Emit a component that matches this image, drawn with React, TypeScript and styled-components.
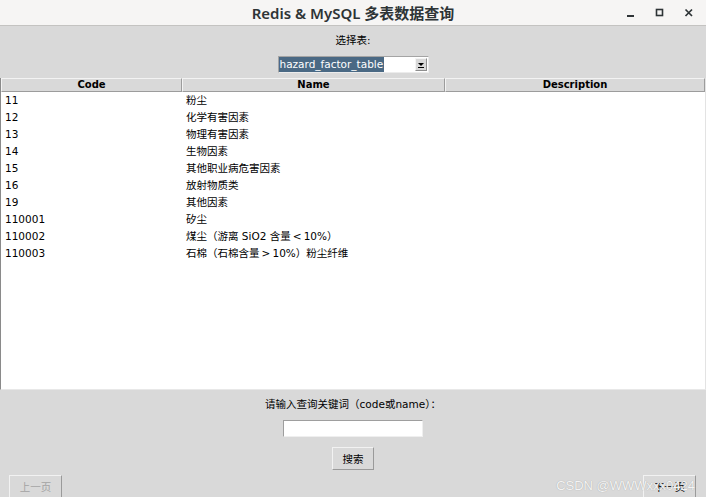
import React from 'react';
import styled, { createGlobalStyle } from 'styled-components';

const GlobalStyle = createGlobalStyle`
    html, body {
        margin: 0;
        padding: 0;
        background: #d9d9d9;
    }
    * {
        box-sizing: border-box;
    }
`;

const FONT = `"DejaVu Sans", "Noto Sans CJK SC", sans-serif`;

// 窗口
const Window = styled.div`
    position: relative;
    width: 706px;
    height: 497px;
    display: flex;
    flex-direction: column;
    overflow: hidden;
    background: #d9d9d9;
    font-family: ${FONT};
    color: #000;
`;

const TitleBar = styled.div`
    height: 26px;
    flex: none;
    display: grid;
    grid-template-columns: 1fr auto 1fr;
    align-items: center;
    background: #f6f5f4;
    border-bottom: 1px solid #c4c3c1;
`;

const Title = styled.div`
    grid-column: 2;
    font-family: "Noto Sans", "Noto Sans CJK SC", sans-serif;
    font-weight: 600;
    font-size: 15px;
    color: #2e3436;
    line-height: 25px;
    padding-top: 1px;
`;

const Controls = styled.div`
    grid-column: 3;
    justify-self: end;
    display: flex;
    align-items: center;
    gap: 15px;
    padding-right: 10px;
`;

const ControlBtn = styled.div`
    width: 14px;
    height: 14px;
    display: flex;
    align-items: center;
    justify-content: center;
`;

// 顶部：选择表
const TopPanel = styled.div`
    flex: none;
    display: flex;
    flex-direction: column;
    align-items: center;
    padding-top: 7px;
`;

const Label = styled.div`
    font-size: 10.5px;
    line-height: 14px;
    height: 14px;
`;

const Combo = styled.div`
    margin-top: 9px;
    width: 151px;
    height: 17px;
    display: flex;
    align-items: center;
    background: #fff;
    border: 1px solid #a4a4a4;
    border-right-color: #ececec;
    border-bottom-color: #ececec;
`;

const ComboText = styled.div`
    flex: 1;
    height: 15px;
    display: flex;
    align-items: center;
    font-size: 10.5px;
`;

const Selected = styled.span`
    background: #4a6984;
    color: #fff;
    line-height: 15px;
    padding: 0 1px;
`;

const ComboArrow = styled.div`
    width: 12px;
    height: 13px;
    margin-right: 1px;
    background: #d9d9d9;
    border: 1px solid;
    border-color: #f4f4f4 #8e8e8e #8e8e8e #f4f4f4;
    display: flex;
    align-items: center;
    justify-content: center;
`;

// 表格
const Tree = styled.div`
    margin-top: 5px;
    height: 312px;
    flex: none;
    display: flex;
    flex-direction: column;
    background: #fff;
    border-left: 1px solid #8a8a8a;
    border-right: 1px solid #e3e3e3;
    border-bottom: 1px solid #e8e8e8;
`;

const Cols = styled.div`
    display: grid;
    grid-template-columns: 181px 263px 1fr;
`;

const HeaderRow = styled(Cols)`
    height: 14px;
    background: #d9d9d9;
`;

const HeaderCell = styled.div`
    border: 1px solid;
    border-color: #f3f3f3 #9c9c9c #9c9c9c #f3f3f3;
    font-weight: 700;
    font-size: 10px;
    line-height: 12px;
    text-align: center;
`;

const Row = styled(Cols)`
    height: 17px;
    align-items: center;
`;

const Cell = styled.div<{ $pad?: number }>`
    padding-left: ${(p) => p.$pad ?? 4}px;
    font-size: 10.5px;
    line-height: 17px;
    white-space: nowrap;
`;

// 底部：搜索
const BottomPanel = styled.div`
    flex: 1;
    display: flex;
    flex-direction: column;
    align-items: center;
    padding-top: 7px;
`;

const Entry = styled.div`
    margin-top: 9px;
    width: 140px;
    height: 17px;
    background: #fff;
    border: 1px solid;
    border-color: #9e9e9e #efefef #efefef #9e9e9e;
`;

const Button = styled.div<{ $disabled?: boolean }>`
    height: 23px;
    padding: 0 9px;
    display: flex;
    align-items: center;
    justify-content: center;
    background: #d9d9d9;
    border: 1px solid;
    border-color: #f2f2f2 #9a9a9a #9a9a9a #f2f2f2;
    font-size: 10.5px;
    color: ${(p) => (p.$disabled ? '#a3a3a3' : '#000')};
`;

const SearchButton = styled(Button)`
    margin-top: 10px;
    width: 42px;
`;

const Pager = styled.div`
    align-self: stretch;
    margin-top: 5px;
    display: flex;
    justify-content: space-between;
    padding: 0 10px 0 9px;
`;

const PageButton = styled(Button)`
    width: 53px;
`;

const Watermark = styled.div`
    position: absolute;
    right: 11px;
    bottom: 4px;
    font-family: "Liberation Sans", "Noto Sans", sans-serif;
    font-size: 13px;
    color: #f4f4f4;
    text-shadow: 0 0 1px #9a9a9a;
    pointer-events: none;
`;

const rows = [
    ['11', '粉尘'],
    ['12', '化学有害因素'],
    ['13', '物理有害因素'],
    ['14', '生物因素'],
    ['15', '其他职业病危害因素'],
    ['16', '放射物质类'],
    ['19', '其他因素'],
    ['110001', '矽尘'],
    ['110002', '煤尘（游离 SiO2 含量\u2009<\u200910%）'],
    ['110003', '石棉（石棉含量\u2009>\u200910%）粉尘纤维'],
];

const App = () => {
    return (
        <Window>
            <GlobalStyle />
            <TitleBar>
                <Title>Redis &amp; MySQL 多表数据查询</Title>
                <Controls>
                    <ControlBtn>
                        <svg width="10" height="10" viewBox="0 0 10 10">
                            <rect x="1" y="7" width="7" height="2" fill="#2e3436" />
                        </svg>
                    </ControlBtn>
                    <ControlBtn>
                        <svg width="10" height="10" viewBox="0 0 10 10">
                            <rect x="1.5" y="1.5" width="6" height="6" fill="none" stroke="#2e3436" strokeWidth="1.6" />
                        </svg>
                    </ControlBtn>
                    <ControlBtn>
                        <svg width="10" height="10" viewBox="0 0 10 10">
                            <path d="M1.5 1.5 L8 8 M8 1.5 L1.5 8" stroke="#2e3436" strokeWidth="1.7" />
                        </svg>
                    </ControlBtn>
                </Controls>
            </TitleBar>

            <TopPanel>
                <Label>选择表:</Label>
                <Combo>
                    <ComboText>
                        <Selected>hazard_factor_table</Selected>
                    </ComboText>
                    <ComboArrow>
                        <svg width="6" height="6" viewBox="0 0 6 6">
                            <path d="M0 1 L6 1 L3 4 Z" fill="#000" />
                            <rect x="0" y="5" width="6" height="1" fill="#000" />
                        </svg>
                    </ComboArrow>
                </Combo>
            </TopPanel>

            <Tree>
                <HeaderRow>
                    <HeaderCell>Code</HeaderCell>
                    <HeaderCell>Name</HeaderCell>
                    <HeaderCell>Description</HeaderCell>
                </HeaderRow>
                {rows.map(([code, name]) => (
                    <Row key={code}>
                        <Cell>{code}</Cell>
                        <Cell>{name}</Cell>
                        <Cell />
                    </Row>
                ))}
            </Tree>

            <BottomPanel>
                <Label>请输入查询关键词（code或name）：</Label>
                <Entry />
                <SearchButton>搜索</SearchButton>
                <Pager>
                    <PageButton $disabled>上一页</PageButton>
                    <PageButton>下一页</PageButton>
                </Pager>
            </BottomPanel>

            <Watermark>CSDN @WWWxxx0424</Watermark>
        </Window>
    );
};

export default App;
